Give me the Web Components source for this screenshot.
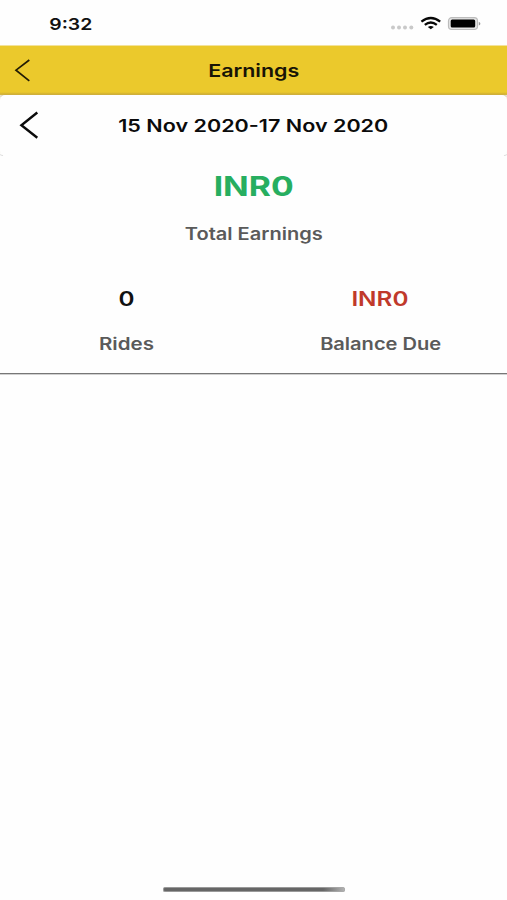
<!DOCTYPE html>
<html lang="en">
<head>
<meta charset="utf-8">
<title>Earnings</title>
<style>
html,body{margin:0;background:#fefefe;font-family:Inter,"Liberation Sans",sans-serif}
</style>
</head>
<body>
<earnings-screen></earnings-screen>
<script>
const define = (name, html, init) => customElements.define(name, class extends HTMLElement {
  connectedCallback() {
    if (this.shadowRoot) return;
    this.attachShadow({mode: 'open'}).innerHTML = html;
    if (init) init(this);
  }
});

// Label widened horizontally to the width given in the "w" attribute.
define('wide-label', `<style>
:host{display:flex;justify-content:center;white-space:nowrap;line-height:24px;height:24px;font-weight:600}
span{display:block;flex:none;transform-origin:50% 50%}
</style><span><slot></slot></span>`, el => {
  const s = el.shadowRoot.querySelector('span');
  el.style.width = el.getAttribute('w') + 'px';
  el.style.fontSize = el.getAttribute('size') + 'px';
  s.style.transform = `scaleX(${el.getAttribute('w') / s.getBoundingClientRect().width})`;
});

define('status-bar', `<style>
:host{display:flex;height:45px;box-sizing:border-box;padding:12px 26px 9px 49px;justify-content:space-between;align-items:center;color:#111}
svg{display:block}
</style>
<wide-label w="43" size="16">9:32</wide-label>
<svg width="91" height="18" viewBox="0 0 91 18">
<g fill="#c9c9c9"><circle cx="3" cy="12.5" r="2"/><circle cx="9" cy="12.5" r="2"/><circle cx="15" cy="12.5" r="2"/><circle cx="21.3" cy="12.5" r="2"/></g>
<g fill="none" stroke="#080808" stroke-width="2.3"><path d="M31.4 6.7Q40.8-.7 50.2 6.7"/><path d="M34.8 9.9Q40.8 5.2 46.8 9.9"/></g>
<path d="M37.8 12Q40.8 9.8 43.8 12L40.8 14.3Z" fill="#080808"/>
<rect x="58.5" y="2.7" width="29" height="11.8" rx="3.2" fill="#e6e6e6" stroke="#bcbcbc" stroke-width="1.2"/>
<rect x="60.7" y="4.6" width="24.5" height="8" rx="1.5" fill="#000"/>
<path d="M88.8 7Q90.4 7.3 90.4 8.7Q90.4 10 88.8 10.4Z" fill="#999"/>
</svg>`);

define('title-bar', `<style>
:host{display:grid;grid-template-columns:1fr auto 1fr;align-items:center;height:52px;box-sizing:border-box;background:linear-gradient(#f3e29a 0 1px,#ebc92c 1px 47px,#d5b232 49px,#d9bd4c 50px,#e9e5d8 50px);color:#171406}
svg{display:block}
</style>
<svg width="40" height="50" viewBox="0 0 40 50"><path d="M29.3 14L16 24.2L29.3 34.8" fill="none" stroke="#221c05" stroke-width="1.7"/></svg>
<wide-label w="91" size="17.3"><slot></slot></wide-label>`);

define('date-card', `<style>
:host{position:relative;display:grid;grid-template-columns:1fr auto 1fr;align-items:center;height:61px;margin-top:-2px;background:#fefefe;border-radius:5px;color:#0b0b0b;box-shadow:0 -1px 1px #b9983444}
svg{display:block}
wide-label{margin-left:-1px}
.c{position:absolute;bottom:0;width:5px;height:5px;box-sizing:border-box}
.l{left:-2px;border-bottom:1px solid #ddd;border-left:1px solid #ddd;border-radius:0 0 0 5px}
.r{right:-2px;border-bottom:1px solid #ddd;border-right:1px solid #ddd;border-radius:0 0 5px 0}
</style>
<svg width="50" height="61" viewBox="0 0 50 61"><path d="M37.3 17.5L21.4 30.2L37.3 42.8" fill="none" stroke="#0b0b0b" stroke-width="2.4"/></svg>
<wide-label w="270" size="17.3"><slot></slot></wide-label>
<i class="c l"></i><i class="c r"></i>`);

define('stat-block', `<style>
:host{display:flex;flex-direction:column;align-items:center}
.v{color:var(--value,#111)}
.n{color:#5a5a5a;margin-top:var(--gap,21px)}
</style><wide-label class="v"></wide-label><wide-label class="n"></wide-label>`, el => {
  const [v, n] = el.shadowRoot.querySelectorAll('wide-label');
  const fill = (node, key) => {
    const [text, w, size, weight] = el.getAttribute(key).split('|');
    const label = document.createElement('wide-label');
    label.className = node.className;
    label.textContent = text;
    label.setAttribute('w', w);
    label.setAttribute('size', size);
    if (weight) label.style.fontWeight = weight;
    node.replaceWith(label);
  };
  fill(v, 'value');
  fill(n, 'name');
});

define('earnings-screen', `<style>
:host{display:flex;flex-direction:column;height:900px;width:507px;overflow:hidden;background:#fefefe}
.total{margin-top:18px;--value:#27ae60;--gap:24px}
.row{display:grid;grid-template-columns:1fr 1fr;margin-top:41px;padding-bottom:17px;border-bottom:1px solid #777;box-shadow:0 1px #d0d0d0}
.due{--value:#c0392b}
.home{margin:auto auto 8px 163px;width:182px;height:5px;border-radius:3px;background:linear-gradient(90deg,#666 88%,#b4b4b4);box-shadow:inset 0 0 0 .7px #aaa}
</style>
<status-bar></status-bar>
<title-bar>Earnings</title-bar>
<date-card>15 Nov 2020-17 Nov 2020</date-card>
<stat-block class="total" value="INR0|80|27.5|700" name="Total Earnings|138|16.8"></stat-block>
<div class="row">
<stat-block value="0|16|19.5" name="Rides|55|16.8"></stat-block>
<stat-block class="due" value="INR0|57|19.5" name="Balance Due|121|16.8"></stat-block>
</div>
<div class="home"></div>`);
</script>
</body>
</html>
